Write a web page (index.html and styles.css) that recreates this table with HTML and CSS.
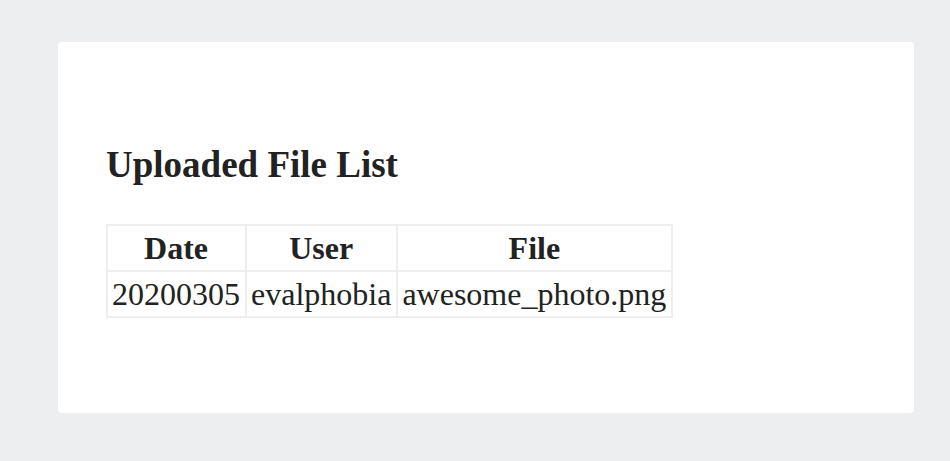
FILE: index.html
```html
<!DOCTYPE html>
<html>
<head>
<meta charset="utf-8">
<link rel="stylesheet" href="styles.css">
</head>
<body>
<div class="page">
  <div class="card">
    <h2 class="title">Uploaded File List</h2>
    <table class="files">
      <thead>
        <tr><th>Date</th><th>User</th><th>File</th></tr>
      </thead>
      <tbody>
        <tr><td>20200305</td><td>evalphobia</td><td>awesome_photo.png</td></tr>
      </tbody>
    </table>
  </div>
</div>
</body>
</html>
```
FILE: styles.css
```css
html, body {
  margin: 0;
  padding: 0;
  background: #edeef0;
}
body {
  font-family: "Liberation Serif", "Times New Roman", serif;
  color: #222;
}
.page {
  padding: 42px 36px 48px 58px;
}
.card {
  background: #fff;
  border-radius: 4px;
  padding: 102px 48px 96px 48px;
  height: 371px;
  box-sizing: border-box;
}
.title {
  font-size: 37px;
  font-weight: bold;
  margin: 0 0 39px 0;
  line-height: 41px;
}
.files {
  border-collapse: collapse;
  font-size: 32px;
}
.files th, .files td {
  border: 2px solid #eeeeee;
  padding: 3px 5px 3px 4px;
  line-height: 38px;
  text-align: center;
}
.files th {
  font-weight: bold;
}
```
